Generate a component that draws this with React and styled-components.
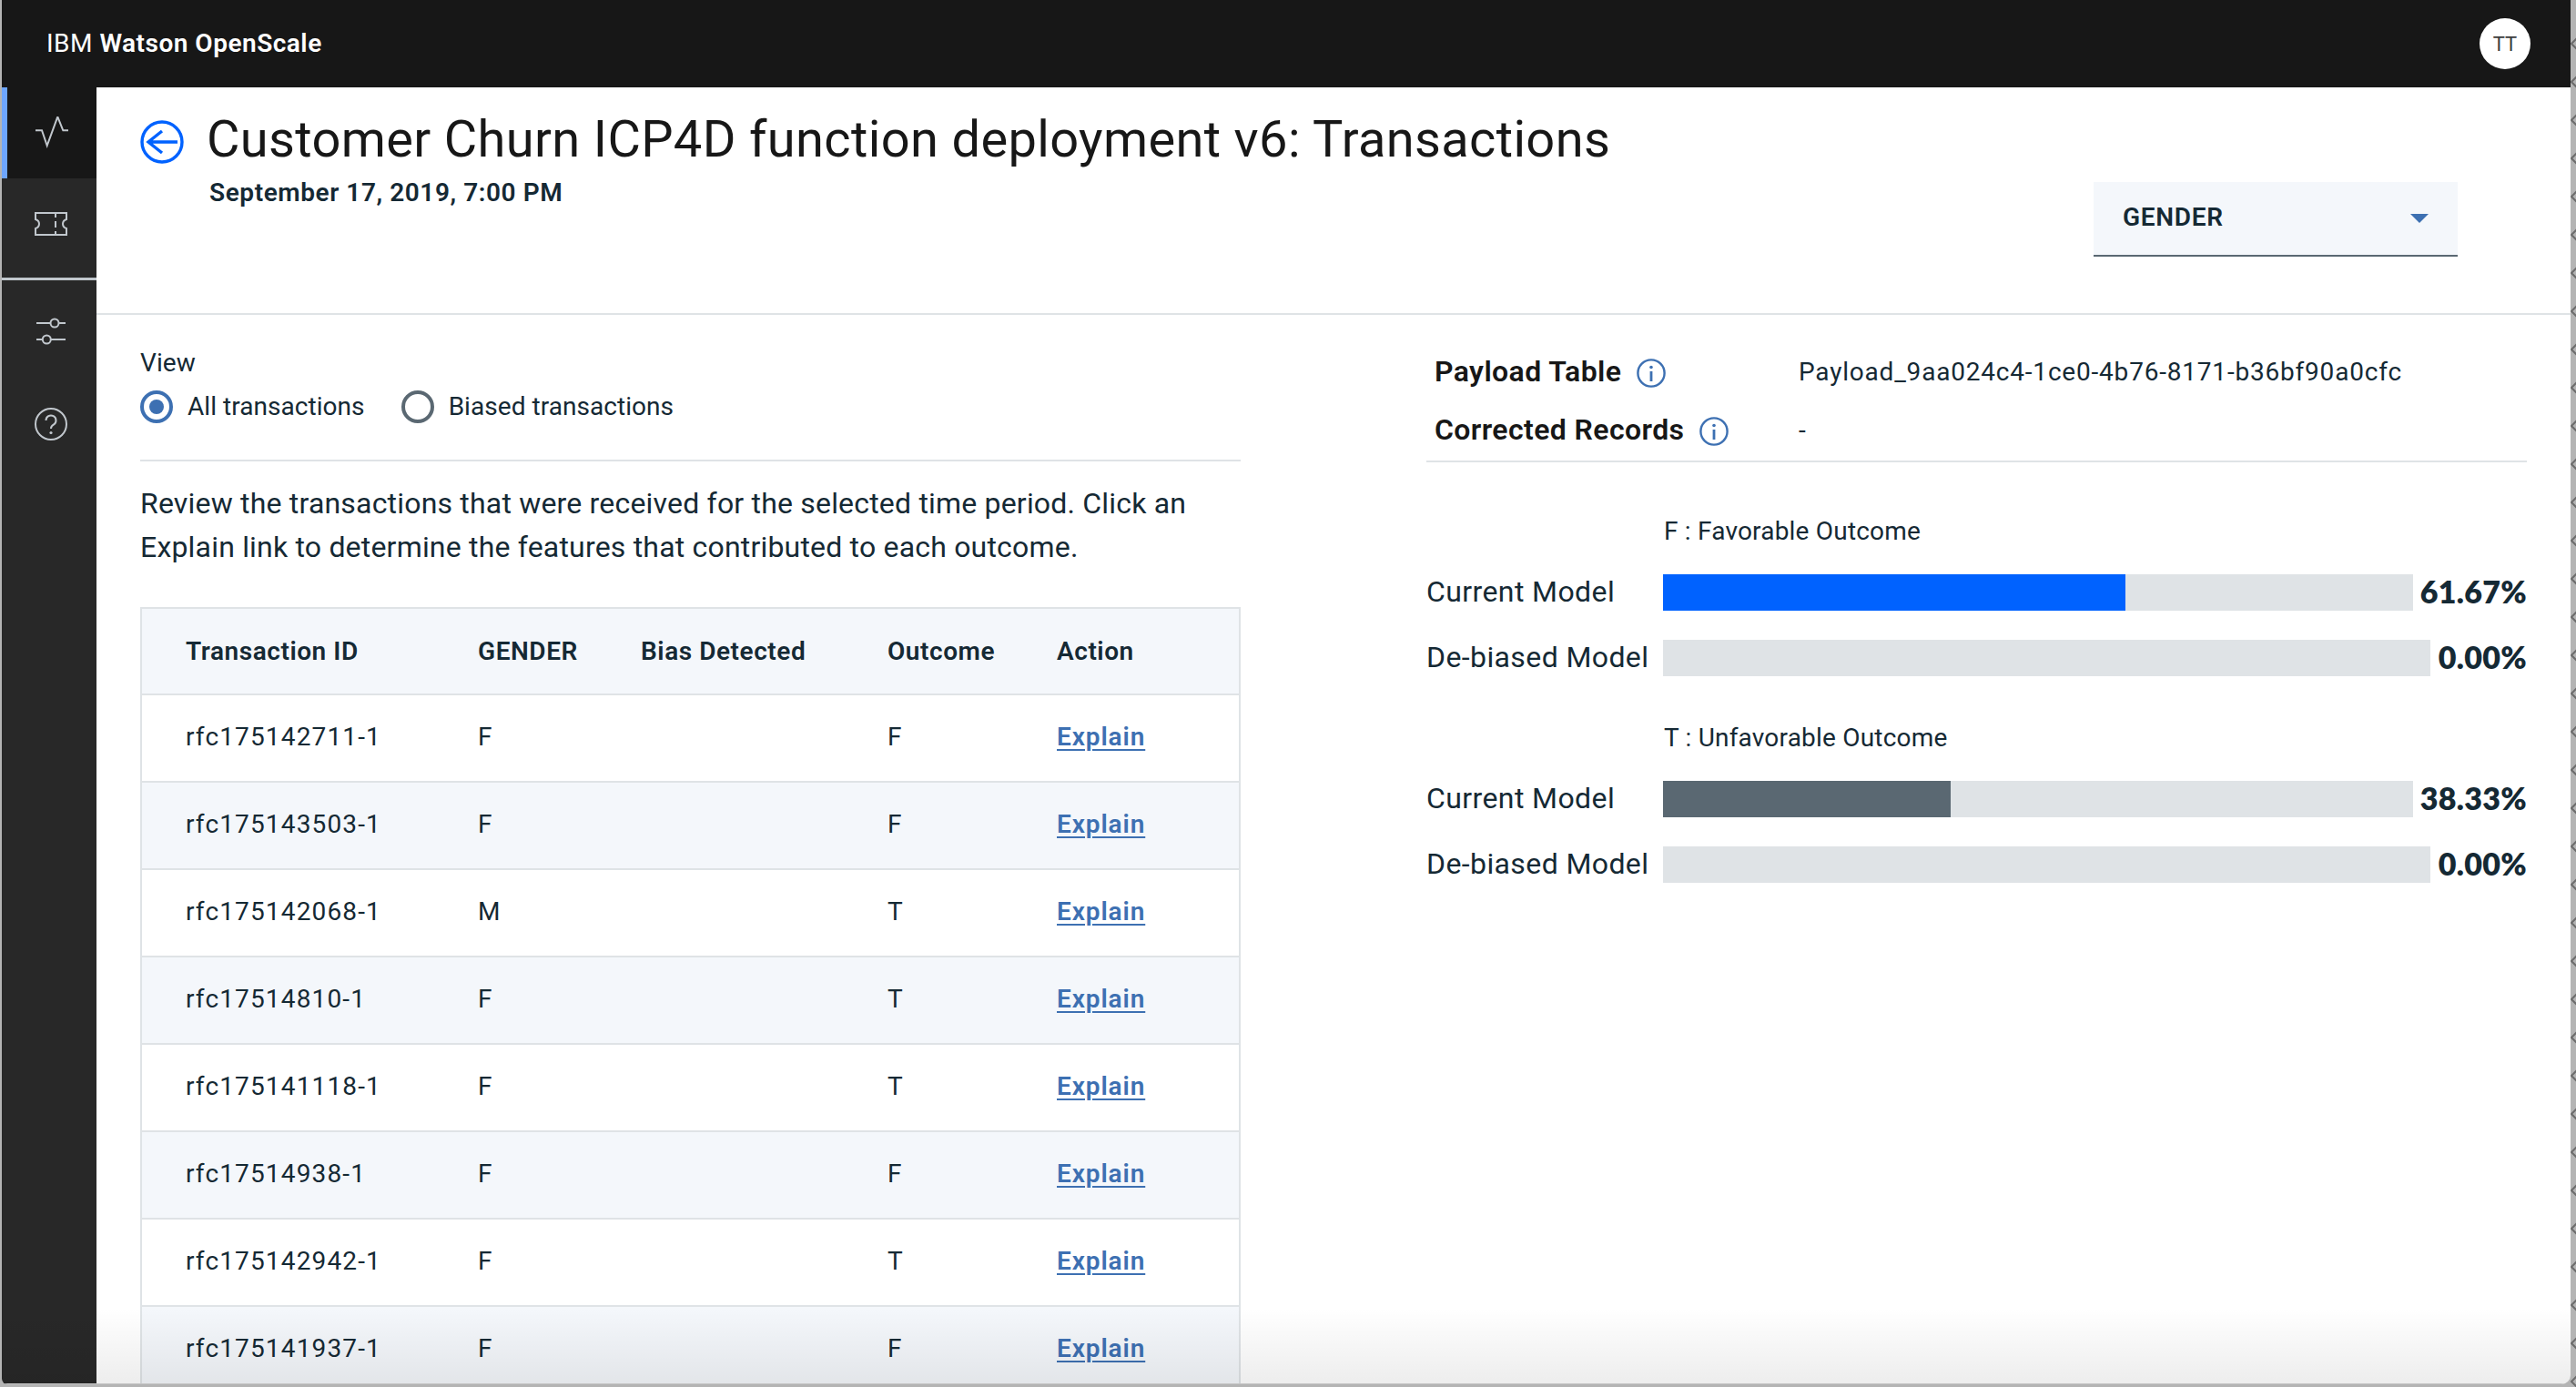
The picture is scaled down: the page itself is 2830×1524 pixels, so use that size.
import React from "react";
import styled, { createGlobalStyle } from "styled-components";

const Global = createGlobalStyle`
  html, body { margin: 0; padding: 0; height: 100%; }
  body { background: #b9b9b9; overflow: hidden; font-family: Roboto, "Noto Sans", sans-serif; color: #152934; }
  * { box-sizing: border-box; }
`;

const Desktop = styled.div`
  width: 2830px; height: 1524px; position: relative; overflow: hidden;
  background: #b4b4b4; padding: 0 6px 3px 2px;
`;
const Edge = styled.svg`
  position: absolute; right: 0; top: 0; width: 6px; height: 1524px;
`;
const Window = styled.div`
  width: 100%; height: 100%; display: flex; flex-direction: column; position: relative;
  overflow: hidden; background: #fff; border-bottom-right-radius: 10px; border-bottom-left-radius: 6px;
`;
const Fade = styled.div`
  position: absolute; left: 0; right: 0; bottom: 0; height: 84px; pointer-events: none;
  background: linear-gradient(to bottom, rgba(0,0,0,0), rgba(0,0,0,.07));
  border-bottom: 1px solid #c4c4c4;
`;
const TopBar = styled.header`
  height: 96px; flex: none; background: #171717; display: flex; align-items: center;
  justify-content: space-between; padding: 0 44px 2px 49px;
`;
const Brand = styled.div`
  color: #fff; font-size: 28px; letter-spacing: .5px; font-weight: 400;
  b { font-weight: 600; }
`;
const Avatar = styled.div`
  width: 56px; height: 56px; border-radius: 50%; background: #fff; color: #3d3d3d;
  display: flex; align-items: center; justify-content: center; font-size: 22px; margin-top: 2px;
`;
const Body = styled.div`
  flex: 1; display: flex; min-height: 0;
`;
const Sidebar = styled.nav`
  width: 104px; flex: none; background: #282828; display: flex; flex-direction: column;
`;
const NavItem = styled.div`
  height: ${p => p.$h || 100}px; display: flex; align-items: center; justify-content: center;
  padding-left: 4px; color: #c1c7cd;
  background: ${p => (p.$active ? "#171717" : "transparent")};
  border-left: ${p => (p.$active ? "6px solid #6ea6ff" : "none")};
  ${p => p.$active && "padding-left: 0;"}
`;
const NavDivider = styled.div`
  height: 3px; background: #c1c7cd; margin: 9px 0 5px;
`;
const Main = styled.main`
  flex: 1; min-width: 0; display: flex; flex-direction: column;
`;
const PageHead = styled.section`
  height: 250px; flex: none; display: flex; justify-content: space-between;
  padding: 0 124px 0 48px; border-bottom: 2px solid #dfe3e6;
`;
const TitleRow = styled.div`
  display: flex; align-items: flex-start; gap: 25px; padding-top: 24px;
`;
const Title = styled.h1`
  margin: 0; font-size: 56px; font-weight: 400; line-height: 66px; color: #171717; letter-spacing: .35px;
`;
const DateText = styled.div`
  margin: 6px 0 0 76px; font-size: 28px; line-height: 40px; font-weight: 600; letter-spacing: .58px; color: #152934;
`;
const Select = styled.div`
  width: 400px; height: 82px; margin-top: 104px; background: #f4f7fb; border-bottom: 2px solid #5a6872;
  display: flex; align-items: center; justify-content: space-between; padding: 0 32px 4px 32px;
  font-size: 28px; font-weight: 600; letter-spacing: .7px;
`;
const Caret = styled.span`
  width: 0; height: 0; border-left: 10px solid transparent; border-right: 10px solid transparent;
  border-top: 10px solid #3d70b2; margin-top: 4px;
`;
const Content = styled.div`
  flex: 1; min-height: 0; display: flex; justify-content: space-between; padding: 0 48px 0 48px;
`;
const Left = styled.section`
  width: 1209px; flex: none;
`;
const Right = styled.section`
  width: 1209px; flex: none;
`;
const ViewLabel = styled.div`
  margin-top: 35px; font-size: 28px; line-height: 36px; letter-spacing: .1px;
`;
const Radios = styled.div`
  display: flex; align-items: center; gap: 40px; margin-top: 12px; padding-bottom: 40px;
  border-bottom: 2px solid #dfe3e6;
`;
const RadioLabel = styled.label`
  display: flex; align-items: center; gap: 16px; font-size: 28px; line-height: 36px; letter-spacing: .05px;
`;
const RadioDot = styled.span`
  width: 36px; height: 36px; border-radius: 50%; flex: none; display: flex; align-items: center; justify-content: center;
  border: 4px solid ${p => (p.$on ? "#3d70b2" : "#5a6872")};
  &::after { content: ""; width: 16px; height: 16px; border-radius: 50%; background: ${p => (p.$on ? "#3d70b2" : "transparent")}; }
`;
const Intro = styled.p`
  margin: 22px 0 0; font-size: 32px; line-height: 48px; letter-spacing: .19px; white-space: nowrap;
`;
const Table = styled.div`
  margin-top: 42px; border: solid #dfe3e6; border-width: 2px 2px 0;
`;
const Row = styled.div`
  display: grid; grid-template-columns: 321px 179px 271px 186px 1fr; align-items: center;
  height: ${p => (p.$head ? "95px" : "96px")}; padding: 0 0 ${p => (p.$head ? 0 : 3)}px 48px;
  border-bottom: 2px solid #dfe3e6;
  background: ${p => (p.$shade ? "#f4f7fb" : "#fff")};
  font-size: 28px; letter-spacing: ${p => (p.$head ? ".55px" : "1.15px")}; font-weight: ${p => (p.$head ? 600 : 400)};
`;
const Cell = styled.span`
  white-space: nowrap;
`;
const Explain = styled.a`
  color: #3d70b2; font-weight: 600; letter-spacing: .9px; text-decoration: underline; text-underline-offset: 4px; text-decoration-thickness: 2px;
`;
const Meta = styled.div`
  border-bottom: 2px solid #dfe3e6; padding: 30px 0 0 9px; height: 162px;
  display: grid; grid-template-columns: 400px 1fr; grid-auto-rows: 64px; align-items: center;
`;
const MetaKey = styled.div`
  display: flex; align-items: center; gap: 17px; font-size: 32px; font-weight: 600; color: #171717; letter-spacing: .4px;
  white-space: nowrap;
`;
const MetaValue = styled.div`
  font-size: 28px; letter-spacing: .8px;
`;
const Groups = styled.div`
  padding-top: 58px; display: flex; flex-direction: column; gap: 50px;
`;
const Group = styled.div`
  display: flex; flex-direction: column;
`;
const GroupTitle = styled.div`
  margin: 0 0 29px 261px; font-size: 28px; line-height: 36px; letter-spacing: .2px;
`;
const BarRow = styled.div`
  display: flex; align-items: center; height: 40px; margin-top: ${p => (p.$gap ? 32 : 0)}px;
`;
const BarName = styled.div`
  width: 260px; flex: none; font-size: 32px; letter-spacing: .4px; white-space: nowrap; margin-top: -3px;
`;
const Track = styled.div`
  width: ${p => p.$w}px; height: 40px; flex: none; background: #dfe3e6;
`;
const Fill = styled.div`
  height: 100%; background: ${p => p.$color};
`;
const Pct = styled.div`
  flex: 1; text-align: right; font-family: Lato, sans-serif; font-weight: 800; font-size: 34px; padding-right: 0; letter-spacing: .3px; margin-top: -4px;
`;

const Icon = styled.svg`
  width: 36px; height: 36px; fill: none; stroke: #c1c7cd; stroke-width: 2; display: block;
`;
const BackIcon = styled.svg`
  width: 48px; height: 48px; fill: none; stroke: #0062ff; stroke-width: 3.4; flex: none; display: block; margin-top: 12px;
`;
const InfoSvg = styled.svg`
  width: 32px; height: 32px; fill: none; stroke: #3d70b2; stroke-width: 2.4; flex: none; display: block; margin-top: 3px;
`;
const Info = () => (
  <InfoSvg viewBox="0 0 32 32">
    <circle cx="16" cy="16" r="14.6" />
    <circle cx="16" cy="9.5" r="1.8" fill="#3d70b2" stroke="none" />
    <path d="M16 14v11" strokeWidth="2.8" />
  </InfoSvg>
);

const rows = [
  ["rfc175142711-1", "F", "F"],
  ["rfc175143503-1", "F", "F"],
  ["rfc175142068-1", "M", "T"],
  ["rfc17514810-1", "F", "T"],
  ["rfc175141118-1", "F", "T"],
  ["rfc17514938-1", "F", "F"],
  ["rfc175142942-1", "F", "T"],
  ["rfc175141937-1", "F", "F"],
];

const groups = [
  { title: "F : Favorable Outcome", cur: 61.67, color: "#0062ff" },
  { title: "T : Unfavorable Outcome", cur: 38.33, color: "#5a6872" },
];

const chevrons = Array.from({ length: 40 }, (_, i) => 42 * i + 6);

export default function App() {
  return (
    <>
      <Global />
      <Desktop>
        <Edge viewBox="0 0 6 1524">
          {chevrons.map(y => (
            <path key={y} d={`M7 ${y + 36}l-6 6 6 6`} fill="none" stroke="#6d6d6d" strokeWidth="2" />
          ))}
        </Edge>
        <Window>
          <TopBar>
            <Brand>IBM <b>Watson OpenScale</b></Brand>
            <Avatar>TT</Avatar>
          </TopBar>
          <Body>
            <Sidebar>
              <NavItem $active>
                <Icon viewBox="0 0 36 36"><path d="M0 15.3h7l5.7 16.7L24.3.3l6 15H36" /></Icon>
              </NavItem>
              <NavItem>
                <Icon viewBox="0 0 36 36">
                  <path d="M1 6h34v7c-3 1-4 3-4 5s1 4 4 5v7H1v-7c3-1 4-3 4-5s-1-4-4-5z" />
                  <path d="M23 6v5M23 15v7M23 26v4" />
                </Icon>
              </NavItem>
              <NavDivider />
              <NavItem $h={102}>
                <Icon viewBox="0 0 36 36">
                  <path d="M2 9h15.500M26.500 9H34M2 27h6.800M17.800 27H34" />
                  <circle cx="22" cy="9" r="4.500" />
                  <circle cx="13.300" cy="27" r="4.500" />
                </Icon>
              </NavItem>
              <NavItem $h={102}>
                <Icon viewBox="0 0 36 36">
                  <circle cx="18" cy="18" r="17" />
                  <path d="M12.500 14a5.500 5.500 0 1 1 8.300 4.700c-1.900 1.100-2.800 2.200-2.800 4.300" />
                  <circle cx="18" cy="27.500" r="1.600" fill="#c1c7cd" stroke="none" />
                </Icon>
              </NavItem>
            </Sidebar>
            <Main>
              <PageHead>
                <div>
                  <TitleRow>
                    <BackIcon viewBox="0 0 48 48">
                      <circle cx="24" cy="24" r="22" />
                      <path d="M41 24H9M24 12L9 24l15 12" />
                    </BackIcon>
                    <Title>Customer Churn ICP4D function deployment v6: Transactions</Title>
                  </TitleRow>
                  <DateText>September 17, 2019, 7:00 PM</DateText>
                </div>
                <Select>GENDER<Caret /></Select>
              </PageHead>
              <Content>
                <Left>
                  <ViewLabel>View</ViewLabel>
                  <Radios>
                    <RadioLabel><RadioDot $on />All transactions</RadioLabel>
                    <RadioLabel><RadioDot />Biased transactions</RadioLabel>
                  </Radios>
                  <Intro>
                    Review the transactions that were received for the selected time period. Click an<br />
                    Explain link to determine the features that contributed to each outcome.
                  </Intro>
                  <Table>
                    <Row $head $shade>
                      <Cell>Transaction ID</Cell><Cell>GENDER</Cell><Cell>Bias Detected</Cell><Cell>Outcome</Cell><Cell>Action</Cell>
                    </Row>
                    {rows.map((r, i) => (
                      <Row key={r[0]} $shade={i % 2 === 1}>
                        <Cell>{r[0]}</Cell><Cell>{r[1]}</Cell><Cell />
                        <Cell>{r[2]}</Cell><Cell><Explain>Explain</Explain></Cell>
                      </Row>
                    ))}
                  </Table>
                </Left>
                <Right>
                  <Meta>
                    <MetaKey>Payload Table <Info /></MetaKey>
                    <MetaValue>Payload_9aa024c4-1ce0-4b76-8171-b36bf90a0cfc</MetaValue>
                    <MetaKey>Corrected Records <Info /></MetaKey>
                    <MetaValue>-</MetaValue>
                  </Meta>
                  <Groups>
                    {groups.map(g => (
                      <Group key={g.title}>
                        <GroupTitle>{g.title}</GroupTitle>
                        <BarRow>
                          <BarName>Current Model</BarName>
                          <Track $w={824}><Fill $color={g.color} style={{ width: `${g.cur}%` }} /></Track>
                          <Pct>{g.cur.toFixed(2)}%</Pct>
                        </BarRow>
                        <BarRow $gap>
                          <BarName>De-biased Model</BarName>
                          <Track $w={843} />
                          <Pct>0.00%</Pct>
                        </BarRow>
                      </Group>
                    ))}
                  </Groups>
                </Right>
              </Content>
            </Main>
          </Body>
          <Fade />
        </Window>
      </Desktop>
    </>
  );
}
